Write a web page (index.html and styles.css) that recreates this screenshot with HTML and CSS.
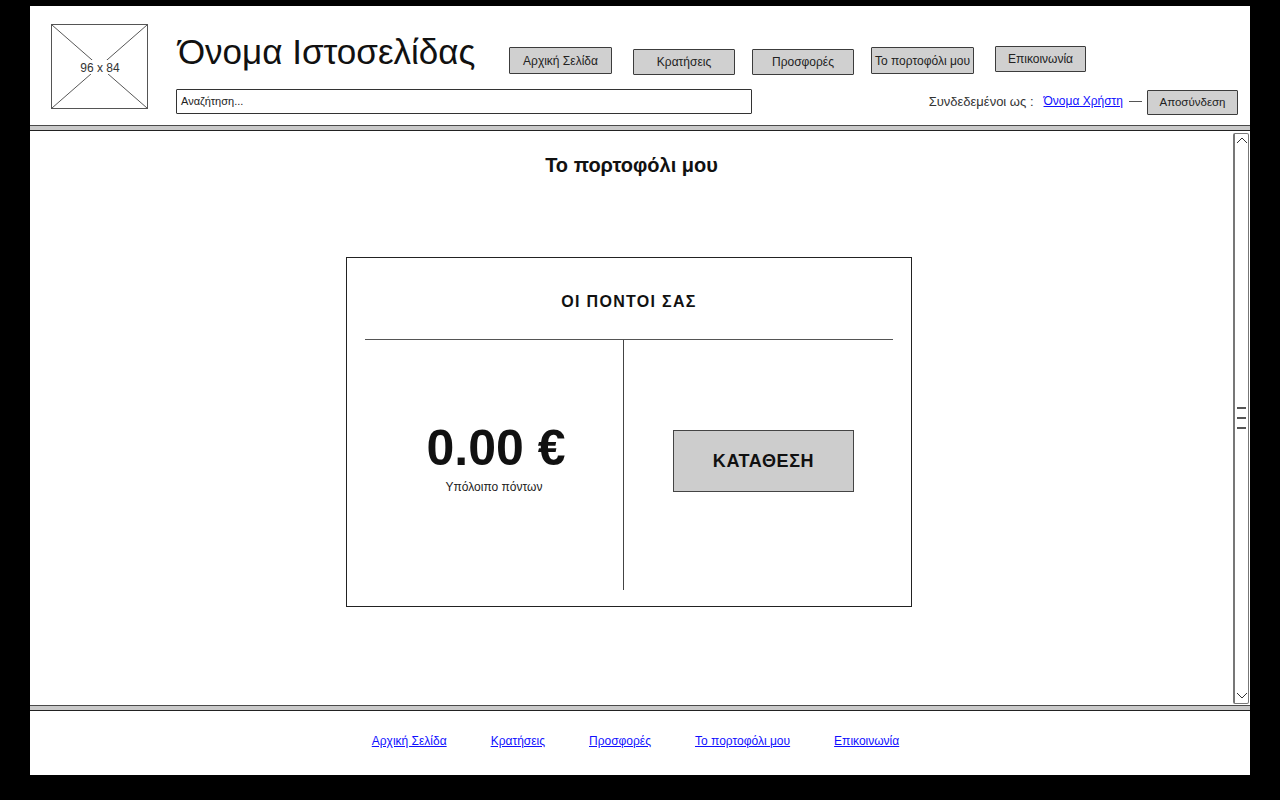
FILE: index.html
```html
<!DOCTYPE html>
<html lang="el">
<head>
<meta charset="utf-8">
<title>Το πορτοφόλι μου</title>
<link rel="stylesheet" href="styles.css">
</head>
<body>
<div class="frame">
  <header class="header">
    <div class="logo">
      <svg width="97" height="85" viewBox="0 0 97 85">
        <rect x="0.5" y="0.5" width="96" height="84" fill="#fff" stroke="#555" stroke-width="1"/>
        <line x1="1" y1="1" x2="96" y2="84" stroke="#444" stroke-width="0.9"/>
        <line x1="96" y1="1" x2="1" y2="84" stroke="#444" stroke-width="0.9"/>
        <rect x="27" y="36" width="44" height="14" fill="#fff"/>
        <text x="49" y="47.5" text-anchor="middle" font-family="Liberation Sans, Arial, sans-serif" font-size="12" fill="#333">96 x 84</text>
      </svg>
    </div>
    <div class="head-main">
      <div class="row1">
        <h1 class="site-title">Όνομα Ιστοσελίδας</h1>
        <nav class="nav">
          <span class="btn b1">Αρχική Σελίδα</span>
          <span class="btn b2">Κρατήσεις</span>
          <span class="btn b3">Προσφορές</span>
          <span class="btn b4">Το πορτοφόλι μου</span>
          <span class="btn b5">Επικοινωνία</span>
        </nav>
      </div>
      <div class="row2">
        <div class="search">Αναζήτηση...</div>
        <div class="login">
          <span class="login-label">Συνδεδεμένοι ως :</span>
          <a class="link user" href="#">Όνομα Χρήστη</a>
          <span class="dash"></span>
          <span class="btn logout">Αποσύνδεση</span>
        </div>
      </div>
    </div>
  </header>
  <div class="sep"></div>
  <div class="content">
    <main class="main">
      <h2 class="page-title">Το πορτοφόλι μου</h2>
      <section class="card">
        <div class="card-head">ΟΙ ΠΟΝΤΟΙ ΣΑΣ</div>
        <div class="card-body">
          <div class="balance">
            <div class="amount">0.00 €</div>
            <div class="amount-label">Υπόλοιπο πόντων</div>
          </div>
          <div class="action">
            <span class="deposit">ΚΑΤΑΘΕΣΗ</span>
          </div>
        </div>
      </section>
    </main>
    <div class="scrollbar">
      <svg class="chev" width="14" height="10" viewBox="0 0 14 10"><polyline points="2,7 7,2 12,7" fill="none" stroke="#333" stroke-width="1"/></svg>
      <div class="grip"><span></span><span></span><span></span></div>
      <svg class="chev" width="14" height="10" viewBox="0 0 14 10"><polyline points="2,3 7,8 12,3" fill="none" stroke="#333" stroke-width="1"/></svg>
    </div>
  </div>
  <div class="sep"></div>
  <footer class="footer">
    <a class="link" href="#">Αρχική Σελίδα</a>
    <a class="link" href="#">Κρατήσεις</a>
    <a class="link" href="#">Προσφορές</a>
    <a class="link" href="#">Το πορτοφόλι μου</a>
    <a class="link" href="#">Επικοινωνία</a>
  </footer>
</div>
</body>
</html>
```

FILE: styles.css
```css
* { box-sizing: border-box; }

html, body {
  margin: 0;
  padding: 0;
  background: #000;
}

body {
  font-family: "Liberation Sans", Arial, sans-serif;
  color: #1e1e1e;
  height: 800px;
  overflow: hidden;
}

.frame {
  margin: 6px 0 0 30px;
  width: 1220px;
  background: #fff;
}

/* ---------- header ---------- */
.header {
  height: 119px;
  display: flex;
  padding: 18px 12px 0 21px;
}

.logo {
  width: 97px;
  height: 85px;
  flex: none;
}

.logo svg { display: block; }

.head-main {
  flex: 1;
  margin-left: 28px;
  display: flex;
  flex-direction: column;
}

.row1 {
  height: 64px;
  display: flex;
  align-items: flex-start;
}

.site-title {
  width: 333px;
  margin: 8px 0 0 0;
  padding-left: 2px;
  font-size: 35px;
  line-height: 40px;
  font-weight: normal;
  color: #111;
  white-space: nowrap;
}

.nav {
  display: flex;
  align-items: flex-start;
  margin-top: 22px;
}

.btn {
  display: flex;
  align-items: center;
  justify-content: center;
  height: 27px;
  background: #d0d0d0;
  border: 1px solid #3c3c3c;
  border-radius: 1px;
  font-size: 12px;
  color: #222;
  white-space: nowrap;
}

.b1 { width: 103px; margin-top: 1px; }
.b2 { width: 102px; margin-left: 21px; margin-top: 3px; height: 26px; }
.b3 { width: 102px; margin-left: 17px; margin-top: 3px; height: 26px; }
.b4 { width: 103px; margin-left: 17px; margin-top: 1px; }
.b5 { width: 91px; margin-left: 21px; height: 26px; }

.row2 {
  display: flex;
  align-items: center;
  height: 26px;
}

.search {
  width: 576px;
  height: 25px;
  border: 1px solid #333;
  border-radius: 1px;
  font-size: 11px;
  line-height: 23px;
  padding-left: 4px;
  color: #222;
}

.login {
  margin-left: auto;
  display: flex;
  align-items: center;
  font-size: 12px;
}

.login-label { color: #333; font-size: 13px; }

.link {
  color: #1010ff;
  text-decoration: underline;
  font-size: 12px;
}

.user { margin-left: 10px; }

.dash {
  width: 13px;
  height: 1px;
  background: #555;
  margin: 0 5px 0 6px;
}

.logout {
  width: 91px;
  height: 25px;
  margin-top: 2px;
  font-size: 11.5px;
}

/* ---------- separators ---------- */
.sep {
  height: 6px;
  border-top: 1px solid #4a4a4a;
  border-bottom: 1px solid #222;
  background: #c9c9c9;
}

/* ---------- content ---------- */
.content {
  height: 574px;
  display: flex;
}

.main {
  flex: 1;
  padding-top: 22px;
}

.page-title {
  margin: 0;
  text-align: center;
  font-size: 20px;
  line-height: 24px;
  font-weight: bold;
  color: #111;
}

.card {
  margin: 80px 0 0 316px;
  width: 566px;
  height: 350px;
  border: 1px solid #222;
  padding: 0 18px 16px 18px;
  display: flex;
  flex-direction: column;
}

.card-head {
  height: 82px;
  flex: none;
  border-bottom: 1px solid #555;
  display: flex;
  align-items: center;
  justify-content: center;
  padding-top: 6px;
  font-size: 16px;
  font-weight: bold;
  letter-spacing: 1.3px;
  color: #111;
}

.card-body {
  flex: 1;
  display: grid;
  grid-template-columns: 259px 1fr;
}

.balance {
  border-right: 1px solid #444;
  text-align: center;
  padding-top: 80px;
}

.amount {
  font-size: 50px;
  line-height: 56px;
  font-weight: bold;
  color: #111;
  padding-left: 4px;
}

.amount-label {
  margin-top: 4px;
  font-size: 12px;
  line-height: 14px;
  color: #222;
}

.action {
  padding: 90px 0 0 49px;
}

.deposit {
  display: flex;
  align-items: center;
  justify-content: center;
  width: 181px;
  height: 62px;
  background: #cdcdcd;
  border: 1px solid #444;
  font-size: 18px;
  font-weight: bold;
  letter-spacing: 0.6px;
  color: #111;
}

/* ---------- scrollbar ---------- */
.scrollbar {
  width: 16px;
  margin: 2px 1px 1px 0;
  border: 1px solid #777;
  border-left-width: 2px;
  border-radius: 2px;
  display: flex;
  flex-direction: column;
  justify-content: space-between;
  align-items: center;
  padding: 2px 0 3px;
}

.chev { display: block; }

.grip {
  display: flex;
  flex-direction: column;
  gap: 8px;
  width: 9px;
}

.grip span {
  display: block;
  height: 2px;
  background: #555;
}

/* ---------- footer ---------- */
.footer {
  height: 64px;
  display: flex;
  justify-content: center;
  align-items: center;
  gap: 44px;
  padding-right: 9px;
  padding-bottom: 4px;
}
```
